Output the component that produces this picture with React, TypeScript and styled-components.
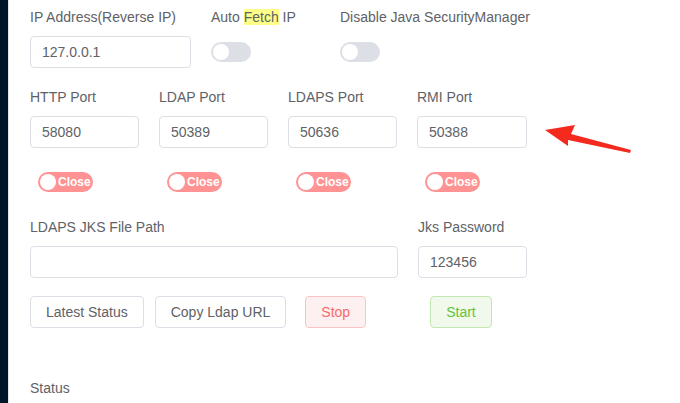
import React from "react";
import styled, { createGlobalStyle } from "styled-components";

const Global = createGlobalStyle`
  html, body { margin: 0; padding: 0; background: #fff; }
  body { font-family: "Liberation Sans", Arial, Helvetica, sans-serif; }
  * { box-sizing: border-box; }
`;

const Shell = styled.div`
  display: flex;
  width: 680px;
  height: 403px;
  overflow: hidden;
  position: relative;
`;

const Side = styled.div`
  width: 8px;
  flex: none;
  background: #001628;
`;

const Divider = styled.div`
  width: 1px;
  flex: none;
  background: #e4e7ed;
`;

const Main = styled.div`
  flex: 1;
  padding: 7px 0 0 21px;
  display: flex;
  flex-direction: column;
`;

const Row = styled.div<{ $cols: string; $mt?: number }>`
  display: grid;
  grid-template-columns: ${(p) => p.$cols};
  column-gap: 20px;
  margin-top: ${(p) => p.$mt ?? 0}px;
`;

const Field = styled.div`
  display: flex;
  flex-direction: column;
`;

const Label = styled.div`
  font-size: 14px;
  line-height: 20px;
  height: 20px;
  color: #606266;
  white-space: nowrap;
  margin-bottom: 9px;
`;

const Mark = styled.span`
  background: #ffff88;
`;

const Input = styled.div<{ $w: number }>`
  width: ${(p) => p.$w}px;
  height: 32px;
  border: 1px solid #dcdfe6;
  border-radius: 4px;
  padding: 0 11px;
  font-size: 14px;
  line-height: 30px;
  color: #606266;
`;

const SwitchWrap = styled.div`
  height: 32px;
  display: flex;
  align-items: center;
`;

const Switch = styled.div`
  width: 40px;
  height: 20px;
  border-radius: 10px;
  background: #dcdfe6;
  padding: 2px;
  display: flex;
  &::before {
    content: "";
    width: 16px;
    height: 16px;
    border-radius: 50%;
    background: #fff;
  }
`;

const CloseSwitch = styled.div`
  width: 55px;
  height: 20px;
  border-radius: 10px;
  background: #ff9292;
  padding: 2px;
  display: flex;
  align-items: center;
  gap: 2px;
  margin-left: 8px;
  color: #fff;
  font-weight: bold;
  font-size: 12px;
  line-height: 16px;
  &::before {
    content: "";
    flex: none;
    width: 16px;
    height: 16px;
    border-radius: 50%;
    background: #fff;
  }
`;

const SwitchRow = styled.div`
  display: grid;
  grid-template-columns: repeat(4, 109px);
  column-gap: 20px;
  margin-top: 24px;
`;

const Buttons = styled.div`
  display: flex;
  margin-top: 18px;
`;

type Tone = "default" | "danger" | "success";
const tones: Record<Tone, { bg: string; border: string; color: string }> = {
  default: { bg: "#fff", border: "#dcdfe6", color: "#606266" },
  danger: { bg: "#fef0f0", border: "#fbc4c4", color: "#f56c6c" },
  success: { bg: "#f0f9eb", border: "#c2e7b0", color: "#67c23a" },
};

const Button = styled.div<{ $tone?: Tone; $ml?: number }>`
  height: 32px;
  padding: 0 15px;
  border: 1px solid ${(p) => tones[p.$tone ?? "default"].border};
  background: ${(p) => tones[p.$tone ?? "default"].bg};
  color: ${(p) => tones[p.$tone ?? "default"].color};
  border-radius: 4px;
  font-size: 14px;
  line-height: 30px;
  margin-left: ${(p) => p.$ml ?? 0}px;
  white-space: nowrap;
`;

const StatusLabel = styled(Label)`
  margin-top: 50px;
`;

const Arrow = styled.svg`
  position: absolute;
  left: 0;
  top: 0;
  pointer-events: none;
`;

export default function App() {
  const ports = [
    ["HTTP Port", "58080"],
    ["LDAP Port", "50389"],
    ["LDAPS Port", "50636"],
    ["RMI Port", "50388"],
  ];
  return (
    <>
      <Global />
      <Shell>
        <Side />
        <Divider />
        <Main>
          <Row $cols="161px 109px auto">
            <Field>
              <Label>IP Address(Reverse IP)</Label>
              <Input $w={161}>127.0.0.1</Input>
            </Field>
            <Field>
              <Label>
                Auto <Mark>Fetch</Mark> IP
              </Label>
              <SwitchWrap>
                <Switch />
              </SwitchWrap>
            </Field>
            <Field>
              <Label>Disable Java SecurityManager</Label>
              <SwitchWrap>
                <Switch />
              </SwitchWrap>
            </Field>
          </Row>
          <Row $cols="repeat(4, 109px)" $mt={19}>
            {ports.map(([l, v]) => (
              <Field key={l}>
                <Label>{l}</Label>
                <Input $w={l === "RMI Port" ? 110 : 109}>{v}</Input>
              </Field>
            ))}
          </Row>
          <SwitchRow>
            {ports.map(([l]) => (
              <div key={l}>
                <CloseSwitch>Close</CloseSwitch>
              </div>
            ))}
          </SwitchRow>
          <Row $cols="368px 109px" $mt={25}>
            <Field>
              <Label>LDAPS JKS File Path</Label>
              <Input $w={368} />
            </Field>
            <Field>
              <Label>Jks Password</Label>
              <Input $w={109}>123456</Input>
            </Field>
          </Row>
          <Buttons>
            <Button>Latest Status</Button>
            <Button $ml={11}>Copy Ldap URL</Button>
            <Button $tone="danger" $ml={19}>
              Stop
            </Button>
            <Button $tone="success" $ml={64}>
              Start
            </Button>
          </Buttons>
          <StatusLabel>Status</StatusLabel>
        </Main>
        <Arrow width="680" height="403" viewBox="0 0 680 403">
          <polygon
            points="545,130 575,125 571,134 631,150 630,153 568,140 568,146"
            fill="#f52a1f"
          />
        </Arrow>
      </Shell>
    </>
  );
}
